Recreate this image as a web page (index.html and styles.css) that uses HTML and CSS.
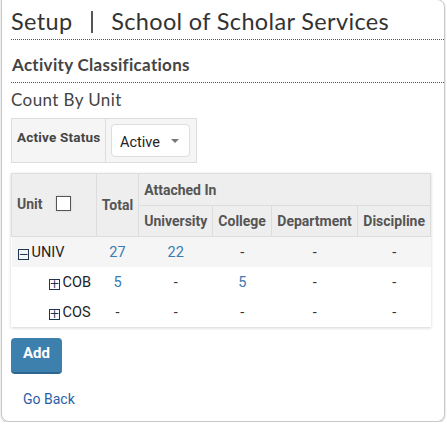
FILE: index.html
```html
<!DOCTYPE html>
<html>
<head>
<meta charset="utf-8">
<link rel="stylesheet" href="styles.css">
</head>
<body>
<div class="panel">
  <h1 class="title">Setup <span class="sep"></span> School of Scholar Services</h1>
  <h2 class="subtitle">Activity Classifications</h2>
  <h3 class="section">Count By Unit</h3>
  <div class="filter">
    <div class="filter-label">Active Status</div>
    <div class="filter-field">
      <div class="select">Active <span class="caret"></span></div>
    </div>
  </div>
  <table class="grid">
    <thead>
      <tr>
        <th rowspan="2" class="c-unit"><span class="unit-head">Unit <span class="checkbox"></span></span></th>
        <th rowspan="2" class="c-total">Total</th>
        <th colspan="4" class="attached">Attached In</th>
      </tr>
      <tr>
        <th class="c-univ">University</th>
        <th class="c-coll">College</th>
        <th class="c-dept">Department</th>
        <th class="c-disc">Discipline</th>
      </tr>
    </thead>
    <tbody>
      <tr class="shade">
        <td class="unit"><span class="tog">&#8722;</span>UNIV</td>
        <td class="num">27</td>
        <td class="num">22</td>
        <td>-</td>
        <td>-</td>
        <td>-</td>
      </tr>
      <tr>
        <td class="unit child"><span class="tog">+</span>COB</td>
        <td class="num">5</td>
        <td>-</td>
        <td class="num">5</td>
        <td>-</td>
        <td>-</td>
      </tr>
      <tr>
        <td class="unit child"><span class="tog">+</span>COS</td>
        <td>-</td>
        <td>-</td>
        <td>-</td>
        <td>-</td>
        <td>-</td>
      </tr>
    </tbody>
  </table>
  <button class="btn">Add</button>
  <a class="back" href="#">Go Back</a>
</div>
</body>
</html>
```
FILE: styles.css
```css
html, body {
  margin: 0;
  padding: 0;
  background: #fff;
}
body {
  font-family: Roboto, "Liberation Sans", sans-serif;
  color: #333;
}
.panel {
  box-sizing: border-box;
  width: 444px;
  height: 423px;
  margin: -1px 0 0 1px;
  border: 1px solid #c8c8c8;
  border-radius: 0 8px 8px 8px;
  box-shadow: 0 1px 2px rgba(0,0,0,0.25);
  padding: 0 0 0 9px;
}
.title {
  margin: 0;
  padding: 7px 0 0 0;
  height: 32px;
  font-family: Lato, "Open Sans", sans-serif;
  font-weight: 400;
  font-size: 23.5px;
  line-height: 28px;
  color: #333;
  border-bottom: 1px dotted #555;
  letter-spacing: 0.35px;
}
.sep {
  display: inline-block;
  width: 2px;
  height: 22px;
  background: #555;
  vertical-align: -3px;
  margin: 0 12px 0 12px;
}
.subtitle {
  margin: 0;
  padding: 15px 0 0 1px;
  height: 27px;
  font-family: Lato, "Open Sans", sans-serif;
  font-weight: 700;
  font-size: 17px;
  line-height: 20px;
  color: #444;
  border-bottom: 1px dotted #555;
  letter-spacing: 0.3px;
}
.section {
  margin: 0;
  padding: 7px 0 0 0;
  height: 26px;
  font-family: Lato, "Open Sans", sans-serif;
  font-weight: 400;
  font-size: 17px;
  line-height: 20px;
  color: #444;
  letter-spacing: 0.4px;
}
.filter {
  display: flex;
  width: 186px;
  height: 45px;
  box-sizing: border-box;
  margin-top: 2px;
  border: 1px solid #ddd;
  background: #fff;
}
.filter-label {
  width: 94px;
  box-sizing: border-box;
  background: #f5f5f5;
  border-right: 1px solid #ddd;
  font-size: 13.5px;
  font-weight: 700;
  color: #444;
  padding: 10px 0 0 5px;
  letter-spacing: 0.2px;
}
.filter-field {
  flex: 1;
  padding: 5px 6px 5px 5px;
  background: #f5f5f5;
}
.select {
  box-sizing: border-box;
  height: 33px;
  width: 79px;
  border: 1px solid #ddd;
  border-radius: 4px;
  background: #fff;
  font-size: 14.5px;
  color: #222;
  padding: 9px 0 0 8px;
  position: relative;
}
.caret {
  position: absolute;
  right: 10px;
  top: 14px;
  width: 0;
  height: 0;
  border-left: 4px solid transparent;
  border-right: 4px solid transparent;
  border-top: 4px solid #777;
}
.grid {
  margin-top: 10px;
  width: 420px;
  border-collapse: collapse;
  font-size: 14px;
  box-shadow: 0 1px 3px rgba(0,0,0,0.18);
}
.grid th {
  background: #eee;
  border: 1px solid #ddd;
  color: #555;
  font-weight: 700;
  font-size: 14px;
  text-align: left;
  padding: 0 5px;
  height: 30px;
  white-space: nowrap;
}
.grid th.attached { padding-top: 1px; }
.c-unit { width: 74px; }
.c-total { width: 31px; }
.c-univ { width: 63px; }
.c-coll { width: 48px; }
.c-dept { width: 75px; }
.unit-head {
  display: flex;
  align-items: center;
  margin-top: -3px;
}
.checkbox {
  display: inline-block;
  width: 15px;
  height: 15px;
  border: 1px solid #555;
  box-sizing: border-box;
  margin-left: 13px;
  background: #fff;
  box-shadow: 0 0 2px rgba(0,0,0,0.15);
}
.grid td {
  height: 30px;
  padding: 0;
  text-align: center;
  font-size: 14.5px;
  color: #333;
  background: #fff;
  border: none;
}
.grid tr.shade td { background: #f5f5f5; }
.grid td.num { color: #3a7ab0; }
.grid td.unit {
  text-align: left;
  padding-left: 6px;
  color: #222;
}
.grid td.unit.child { padding-left: 37px; }
.tog {
  display: inline-block;
  box-sizing: border-box;
  width: 11px;
  height: 11px;
  border: 1px solid #1f3550;
  font-size: 12px;
  line-height: 8px;
  text-align: center;
  color: #1f3550;
  margin-right: 3px;
  vertical-align: -1px;
  font-family: "DejaVu Sans", sans-serif;
}
.btn {
  display: block;
  margin-top: 11px;
  width: 51px;
  height: 36px;
  border: none;
  border-bottom: 2px solid #2f6690;
  border-radius: 4px;
  background: #3d7fad;
  color: #fff;
  font-family: Roboto, sans-serif;
  font-weight: 700;
  font-size: 15px;
  padding: 0 0 4px 0;
}
.back {
  display: block;
  margin: 17px 0 0 12px;
  font-size: 14px;
  color: #2a5fa8;
  text-decoration: none;
}
```
